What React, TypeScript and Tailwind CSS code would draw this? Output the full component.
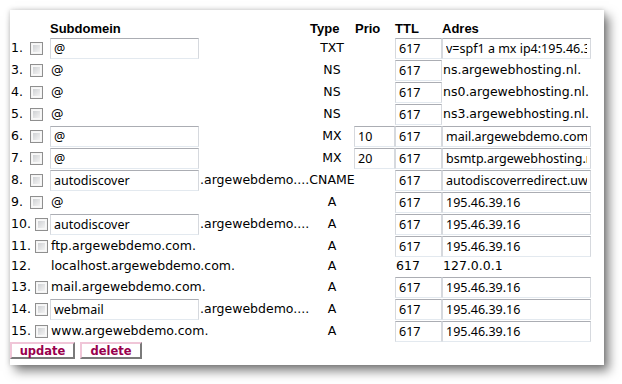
import React from 'react';

type Cell = { input?: string; text?: string } | null;

type Row = {
  n: string;
  cb: boolean;
  sub: Cell;
  suffix?: string;
  type: string;
  prio?: Cell;
  ttl: Cell;
  adres: Cell;
  short?: boolean;
};

const rows: Row[] = [
  { n: '1.', cb: true, sub: { input: '@' }, type: 'TXT', ttl: { input: '617' }, adres: { input: 'v=spf1 a mx ip4:195.46.39.16 ~all' } },
  { n: '3.', cb: true, sub: { text: '@' }, type: 'NS', ttl: { input: '617' }, adres: { text: 'ns.argewebhosting.nl.' } },
  { n: '4.', cb: true, sub: { text: '@' }, type: 'NS', ttl: { input: '617' }, adres: { text: 'ns0.argewebhosting.nl.' } },
  { n: '5.', cb: true, sub: { text: '@' }, type: 'NS', ttl: { input: '617' }, adres: { text: 'ns3.argewebhosting.nl.' } },
  { n: '6.', cb: true, sub: { input: '@' }, type: 'MX', prio: { input: '10' }, ttl: { input: '617' }, adres: { input: 'mail.argewebdemo.com.' } },
  { n: '7.', cb: true, sub: { input: '@' }, type: 'MX', prio: { input: '20' }, ttl: { input: '617' }, adres: { input: 'bsmtp.argewebhosting.nl.' } },
  { n: '8.', cb: true, sub: { input: 'autodiscover' }, suffix: '.argewebdemo....', type: 'CNAME', ttl: { input: '617' }, adres: { input: 'autodiscoverredirect.uwdomein.nl.' } },
  { n: '9.', cb: true, sub: { text: '@' }, type: 'A', ttl: { input: '617' }, adres: { input: '195.46.39.16' } },
  { n: '10.', cb: true, sub: { input: 'autodiscover' }, suffix: '.argewebdemo....', type: 'A', ttl: { input: '617' }, adres: { input: '195.46.39.16' } },
  { n: '11.', cb: true, sub: { text: 'ftp.argewebdemo.com.' }, type: 'A', ttl: { input: '617' }, adres: { input: '195.46.39.16' } },
  { n: '12.', cb: false, sub: { text: 'localhost.argewebdemo.com.' }, type: 'A', ttl: { text: '617' }, adres: { text: '127.0.0.1' }, short: true },
  { n: '13.', cb: true, sub: { text: 'mail.argewebdemo.com.' }, type: 'A', ttl: { input: '617' }, adres: { input: '195.46.39.16' } },
  { n: '14.', cb: true, sub: { input: 'webmail' }, suffix: '.argewebdemo....', type: 'A', ttl: { input: '617' }, adres: { input: '195.46.39.16' } },
  { n: '15.', cb: true, sub: { text: 'www.argewebdemo.com.' }, type: 'A', ttl: { input: '617' }, adres: { input: '195.46.39.16' } },
];

const Checkbox = () => (
  <span className="block w-[13px] h-[13px] border border-[#8f8f8f] bg-[#f4f4f4] p-[1px]">
    <span className="block w-full h-full border border-[#f8f8f8] bg-gradient-to-br from-[#cfd1d4] to-[#f3f3f3]" />
  </span>
);

const Field = ({ value, w }: { value: string; w: string }) => (
  <input
    readOnly
    defaultValue={value}
    className={`${w} h-[21px] border border-[#d6d9de] border-t-[#abadb3] border-b-[#e3e9ef] bg-white px-[3px] text-[12.5px] text-black font-['Noto_Sans','Open_Sans',Arial,sans-serif] outline-none`}
  />
);

const Value = ({ cell, w }: { cell: Cell; w: string }) => {
  if (!cell) return <div />;
  if (cell.input !== undefined) return <div className="flex items-center"><Field value={cell.input} w={w} /></div>;
  return <div className="flex items-center whitespace-nowrap pl-[1px]">{cell.text}</div>;
};

export default function App() {
  return (
    <div className="w-[622px] h-[384px] bg-white pt-[10px] pl-[10px] overflow-hidden">
      <div className="w-[594px] h-[355px] bg-white shadow-[0_0_5px_rgba(0,0,0,0.18),5px_6px_10px_rgba(0,0,0,0.5)] text-[12.5px] text-black font-['DejaVu_Sans',Verdana,sans-serif]">
        <div className="pt-[9px] grid grid-cols-[40px_150px_110px_44px_41px_47px_150px] h-[27px] items-center font-['Liberation_Sans',Arial,sans-serif] font-bold text-[13px]">
          <div />
          <div>Subdomein</div>
          <div />
          <div>Type</div>
          <div className="pl-[1px]">Prio</div>
          <div>TTL</div>
          <div>Adres</div>
        </div>
        {rows.map((r) => (
          <div
            key={r.n}
            className={`grid grid-cols-[40px_150px_110px_44px_41px_47px_150px] ${r.short ? 'h-[19px]' : 'h-[22px]'}`}
          >
            <div className="flex items-center pl-[1px]">
              <span className={r.n.length > 2 ? 'w-[24px]' : 'w-[19px]'}>{r.n}</span>
              {r.cb && <Checkbox />}
            </div>
            <Value cell={r.sub} w="w-[149px]" />
            <div className="flex items-center whitespace-nowrap">{r.suffix}</div>
            <div className="flex items-center justify-center whitespace-nowrap">{r.type}</div>
            <Value cell={r.prio ?? null} w="w-[41px]" />
            <Value cell={r.ttl} w="w-[47px]" />
            <Value cell={r.adres} w="w-[149px]" />
          </div>
        ))}
        <div className="flex gap-[5px] font-['DejaVu_Sans',Verdana,sans-serif] font-bold text-[11.5px] text-[#99004d]">
          <button className="w-[65px] h-[17px] bg-white border-2 border-t-[#f0c6d8] border-l-[#f0c6d8] border-r-[#7a7a7a] border-b-[#7a7a7a] leading-[12px]">
            update
          </button>
          <button className="w-[62px] h-[17px] bg-white border-2 border-t-[#f0c6d8] border-l-[#f0c6d8] border-r-[#7a7a7a] border-b-[#7a7a7a] leading-[12px]">
            delete
          </button>
        </div>
      </div>
    </div>
  );
}
